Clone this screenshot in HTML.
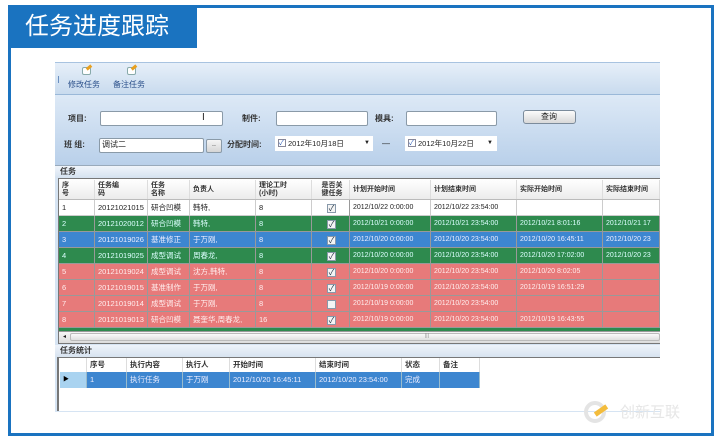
<!DOCTYPE html>
<html><head><meta charset="utf-8"><style>
*{margin:0;padding:0;box-sizing:border-box}
body{width:717px;height:444px;background:#fff;position:relative;overflow:hidden;font-family:"Liberation Sans","Noto Sans CJK SC",sans-serif;font-size:8px;color:#222}
.a{position:absolute}
.t{position:absolute;white-space:nowrap;line-height:1}
.cell{position:absolute;white-space:nowrap;overflow:hidden;font-size:7.5px;padding-left:3px;border-right:1px solid #9aa;}
.inp{position:absolute;background:#fff;border:1px solid #8a9aa8;border-radius:2px}
</style></head><body>
<div class="a" style="left:8px;top:5px;width:706px;height:431px;border:3px solid #1a73c0"></div>
<div class="a" style="left:8px;top:5px;width:189px;height:43px;background:#1a73c0"></div>
<div class="t" style="left:25px;top:15px;color:#fff;font-size:24px">任务进度跟踪</div>

<div class="a" style="left:55px;top:62px;width:605px;height:350px;background:#d6e4f3"></div>
<div class="a" style="left:55px;top:62px;width:605px;height:33px;background:linear-gradient(#e6eff9,#c9dbee);border-top:1px solid #a8c3e0;border-bottom:1px solid #9ab8d8"></div>
<div class="a" style="left:58px;top:76px;width:1px;height:7px;background:#6a8fc0"></div>
<div class="a" style="left:82px;top:67px;width:9px;height:8px;border:1px solid #8aa;background:#fff;border-radius:2px"></div>
<div class="a" style="left:86px;top:66px;width:6px;height:3px;background:#e8a020;transform:rotate(-40deg)"></div>
<div class="a" style="left:127px;top:67px;width:9px;height:8px;border:1px solid #8aa;background:#fff;border-radius:2px"></div>
<div class="a" style="left:131px;top:66px;width:6px;height:3px;background:#e8a020;transform:rotate(-40deg)"></div>
<div class="t" style="left:68px;top:81px;color:#2a4f8a;font-size:8px">修改任务</div>
<div class="t" style="left:113px;top:81px;color:#2a4f8a;font-size:8px">备注任务</div>
<div class="a" style="left:55px;top:95px;width:605px;height:70px;background:linear-gradient(#dde9f6,#b9d0ea)"></div>
<div class="t" style="left:68px;top:115px;font-size:8px;font-weight:bold;color:#333">项目:</div>
<div class="inp" style="left:100px;top:111px;width:123px;height:15px"></div>
<div class="t" style="left:202px;top:113px;font-size:10px">I</div>
<div class="t" style="left:242px;top:115px;font-size:8px;font-weight:bold;color:#333">制件:</div>
<div class="inp" style="left:276px;top:111px;width:92px;height:15px"></div>
<div class="t" style="left:375px;top:115px;font-size:8px;font-weight:bold;color:#333">模具:</div>
<div class="inp" style="left:406px;top:111px;width:91px;height:15px"></div>
<div class="a" style="left:523px;top:110px;width:53px;height:14px;border:1px solid #7b8b9b;border-radius:3px;background:linear-gradient(#fbfbfb,#d8d8d8)"></div>
<div class="t" style="left:541px;top:113px;font-size:8px">查询</div>
<div class="t" style="left:64px;top:141px;font-size:8px;font-weight:bold;color:#333">班 组:</div>
<div class="inp" style="left:99px;top:138px;width:105px;height:15px"></div>
<div class="t" style="left:102px;top:141px;font-size:8px">调试二</div>
<div class="a" style="left:206px;top:139px;width:16px;height:14px;border:1px solid #8a9aa8;border-radius:2px;background:linear-gradient(#f5f5f5,#d5d5d5);font-size:7px;text-align:center;line-height:10px">..</div>
<div class="t" style="left:227px;top:141px;font-size:8px;font-weight:bold;color:#333">分配时间:</div>
<div class="a" style="left:275px;top:136px;width:98px;height:15px;background:#fff"></div>
<div class="a" style="left:278px;top:139px;width:8px;height:8px;border:1px solid #889;font-size:7px;line-height:7px;color:#2a5ab8">✓</div>
<div class="t" style="left:288px;top:140px;font-size:7.5px">2012年10月18日</div>
<div class="t" style="left:364px;top:140px;font-size:6px">▼</div>
<div class="t" style="left:382px;top:140px;font-size:8px">—</div>
<div class="a" style="left:405px;top:136px;width:92px;height:15px;background:#fff"></div>
<div class="a" style="left:408px;top:139px;width:8px;height:8px;border:1px solid #889;font-size:7px;line-height:7px;color:#2a5ab8">✓</div>
<div class="t" style="left:418px;top:140px;font-size:7.5px">2012年10月22日</div>
<div class="t" style="left:487px;top:140px;font-size:6px">▼</div>

<div class="a" style="left:55px;top:165px;width:605px;height:13px;background:linear-gradient(#f0f5fb,#d5e2f0);border-top:1px solid #9ab"></div>
<div class="t" style="left:60px;top:168px;font-size:8px;font-weight:bold;color:#333">任务</div>
<div class="a" style="left:58px;top:178px;width:602px;height:166px;background:#fff;border:1px solid #777"></div>
<div class="a" style="left:59px;top:179px;width:601px;height:21px;background:linear-gradient(#fff,#ececec);border-bottom:1px solid #bbb"></div>
<div id="g"></div>
<div class="a" style="left:59px;top:331px;width:601px;height:12px;background:linear-gradient(#f5f5f5,#dcdcdc);border-top:1px solid #999"></div>
<div class="t" style="left:63px;top:334px;font-size:6px">◂</div>
<div class="a" style="left:70px;top:333px;width:590px;height:8px;background:linear-gradient(#fafafa,#e0e0e0);border:1px solid #bbb;border-radius:2px"></div>
<div class="t" style="left:425px;top:334px;font-size:5px;color:#888">|||</div>

<div class="a" style="left:55px;top:345px;width:605px;height:12px;background:linear-gradient(#eef3fa,#d7e3f0)"></div>
<div class="t" style="left:60px;top:347px;font-size:8px;font-weight:bold;color:#333">任务统计</div>
<div class="a" style="left:57px;top:357px;width:603px;height:54px;background:#fff;border-left:2px solid #777;border-top:1px solid #777"></div>
<div id="b"></div>

<div class="a" style="left:584px;top:401px;width:22px;height:22px;border-radius:50%;border:4px solid #e4e4e4"></div>
<div class="a" style="left:594px;top:408px;width:14px;height:5px;background:#f3bc3c;transform:rotate(-35deg)"></div>
<div class="t" style="left:620px;top:405px;font-size:15px;color:#e6e6e6">创新互联</div>

<script>
var cols=[59,95,148,190,256,312,350,431,517,603,660];
var hdr=["序<br>号","任务编<br>码","任务<br>名称","负责人","理论工时<br>(小时)","是否关<br>键任务","计划开始时间","计划结束时间","实际开始时间","实际结束时间"];
var rows=[
["#fff","#222",["1","20121021015","研合凹模","韩特,","8","c","2012/10/22 0:00:00","2012/10/22 23:54:00","",""]],
["#2e8a4e","#dff",["2","20121020012","研合凹模","韩特,","8","c","2012/10/21 0:00:00","2012/10/21 23:54:00","2012/10/21 8:01:16","2012/10/21 17"]],
["#3d86d0","#eef",["3","20121019026","基准修正","于万刚,","8","c","2012/10/20 0:00:00","2012/10/20 23:54:00","2012/10/20 16:45:11","2012/10/20 23"]],
["#2e8a4e","#dff",["4","20121019025","成型调试","周春龙,","8","c","2012/10/20 0:00:00","2012/10/20 23:54:00","2012/10/20 17:02:00","2012/10/20 23"]],
["#e77a7a","#fee",["5","20121019024","成型调试","沈方,韩特,","8","c","2012/10/20 0:00:00","2012/10/20 23:54:00","2012/10/20 8:02:05",""]],
["#e77a7a","#fee",["6","20121019015","基准制作","于万刚,","8","c","2012/10/19 0:00:00","2012/10/20 23:54:00","2012/10/19 16:51:29",""]],
["#e77a7a","#fee",["7","20121019014","成型调试","于万刚,","8","e","2012/10/19 0:00:00","2012/10/20 23:54:00","",""]],
["#e77a7a","#fee",["8","20121019013","研合凹模","聂奎华,周春龙,","16","c","2012/10/19 0:00:00","2012/10/20 23:54:00","2012/10/19 16:43:55",""]]];
var h="";
for(var i=0;i<10;i++){h+='<div class="cell" style="left:'+cols[i]+'px;top:180px;width:'+(cols[i+1]-cols[i])+'px;height:19px;font-size:7px;font-weight:bold;color:#333;line-height:8px;padding-top:'+(hdr[i].indexOf("<br>")>0?2:6)+'px;border-color:#ddd;'+(i==5?'text-align:center;':'')+'">'+hdr[i]+'</div>';}
rows.forEach(function(r,k){var y=200+k*16;
h+='<div class="a" style="left:59px;top:'+y+'px;width:601px;height:16px;background:'+r[0]+';border-bottom:1px solid '+(k==0?'#ccc':'#999')+'"></div>';
for(var i=0;i<10;i++){var v=r[2][i];
if(i==5){h+='<div class="cell" style="left:'+cols[i]+'px;top:'+y+'px;width:'+(cols[i+1]-cols[i])+'px;height:16px;border-color:#999"><div class="a" style="left:15px;top:4px;width:9px;height:9px;background:#f4f4f4;border:1px solid #8899aa;font-size:8px;line-height:8px;color:#234;text-align:center">'+(v=="c"?"✓":"")+'</div></div>';continue;}
h+='<div class="cell" style="left:'+cols[i]+'px;top:'+y+'px;width:'+(cols[i+1]-cols[i])+'px;height:16px;line-height:16px;color:'+r[1]+';border-color:'+(k==0?'#ccc':'#999')+';font-size:'+(i>=6?7:7.5)+'px">'+v+'</div>';}});
h+='<div class="a" style="left:59px;top:328px;width:601px;height:3px;background:#2e8a4e"></div>';
document.getElementById("g").innerHTML=h;
var bc=[60,87,127,183,230,316,402,440,480];
var bh=["","序号","执行内容","执行人","开始时间","结束时间","状态","备注"];
var br=["▶","1","执行任务","于万刚","2012/10/20 16:45:11","2012/10/20 23:54:00","完成",""];
var s="";
for(var i=0;i<8;i++){s+='<div class="cell" style="left:'+bc[i]+'px;top:358px;width:'+(bc[i+1]-bc[i])+'px;height:14px;line-height:14px;background:#fff;border-color:#ddd;font-size:7.5px;font-weight:bold;color:#333">'+bh[i]+'</div>';
s+='<div class="cell" style="left:'+bc[i]+'px;top:372px;width:'+(bc[i+1]-bc[i])+'px;height:16px;line-height:16px;background:'+(i==0?'#a9d3f0':'#3d86d0')+';color:'+(i==0?'#000':'#eef')+';border-color:#9bc;font-size:'+(i==0?6:7.5)+'px">'+br[i]+'</div>';}
document.getElementById("b").innerHTML=s;
</script>
</body></html>
